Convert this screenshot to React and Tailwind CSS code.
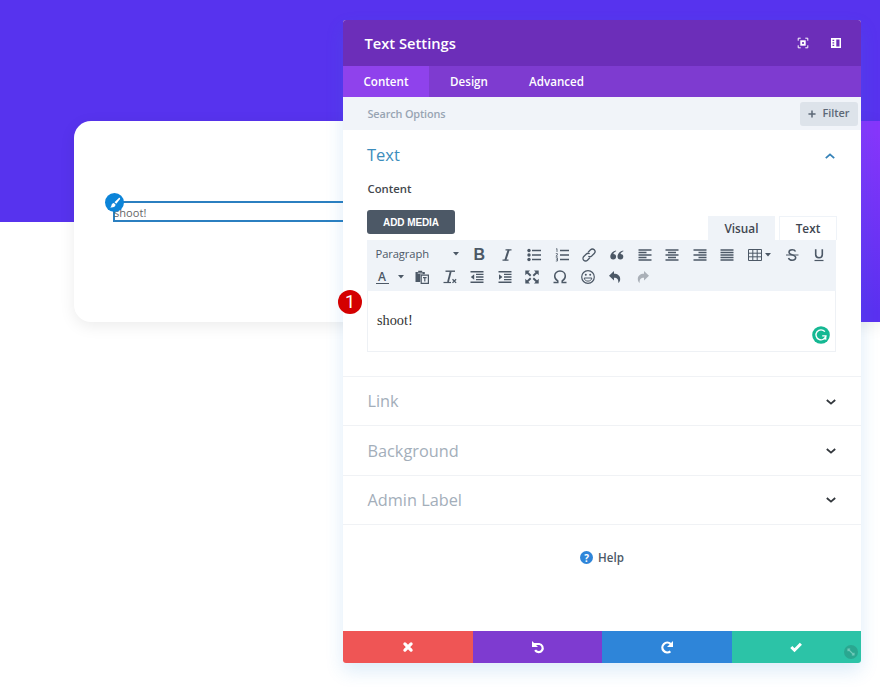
import React from 'react';

const Svg = ({ children, size = 16, className = '' }) => (
  <svg
    width={size}
    height={size}
    viewBox="0 0 16 16"
    fill="none"
    stroke="currentColor"
    strokeWidth="1.5"
    className={`shrink-0 ${className}`}
  >
    {children}
  </svg>
);

const Caret = () => (
  <svg width="6" height="4" viewBox="0 0 6 4" fill="currentColor" className="shrink-0">
    <path d="M0 0h6L3 3.5z" />
  </svg>
);

/* Editor toolbar icons */
const ItalicIcon = () => (
  <Svg>
    <path d="M6.5 2.8h6M3.5 13.2h6" strokeWidth="1.2" />
    <path d="M9.7 2.8L6.3 13.2" strokeWidth="2" />
  </Svg>
);

const BulletListIcon = () => (
  <Svg>
    <path d="M6 3.5h9M6 8h9M6 12.5h9" />
    <g fill="currentColor" stroke="none">
      <circle cx="3" cy="3.5" r="1.7" />
      <circle cx="3" cy="8" r="1.7" />
      <circle cx="3" cy="12.5" r="1.7" />
    </g>
  </Svg>
);

const NumberListIcon = () => (
  <Svg>
    <path d="M6 3.5h9M6 8h9M6 12.5h9" />
    <path
      d="M2 2.2l1-.6v3.4M1.8 6.6h1.6v1.2L1.9 9.2h1.9M1.8 10.8h1.7v3.2H1.8M2.2 12.3h1.3"
      strokeWidth=".8"
    />
  </Svg>
);

const LinkIcon = () => (
  <Svg>
    <g transform="rotate(-45 8 8)" strokeWidth="1.3">
      <path d="M6.6 10.6H3.2a2.6 2.6 0 010-5.2h3.6a2.6 2.6 0 012.5 2.2" />
      <path d="M9.4 5.4h3.400a2.600 2.600 0 010 5.200H9.200a2.600 2.600 0 01-2.500-2.200" />
    </g>
  </Svg>
);

const QuoteIcon = () => (
  <Svg>
    <g fill="currentColor" stroke="none">
      <path d="M7 3.4C3.600 4.200 1.300 6.500 1.300 9.600a2.900 2.900 0 105.800 0A2.700 2.700 0 004.400 7c.2-1.200 1.200-2.100 2.800-2.700z" />
      <path d="M14.200 3.400C10.800 4.200 8.500 6.500 8.500 9.600a2.900 2.900 0 105.800 0A2.700 2.700 0 0011.600 7c.2-1.200 1.200-2.100 2.800-2.700z" />
    </g>
  </Svg>
);

const AlignLeftIcon = () => (
  <Svg><path d="M1.500 3h13M1.500 5.500h8M1.500 8h13M1.500 10.500h8M1.500 13h13" /></Svg>
);

const AlignCenterIcon = () => (
  <Svg><path d="M1.500 3h13M4 5.500h8M1.500 8h13M4 10.500h8M1.500 13h13" /></Svg>
);

const AlignRightIcon = () => (
  <Svg><path d="M1.500 3h13M6.500 5.500h8M1.500 8h13M6.500 10.500h8M1.500 13h13" /></Svg>
);

const JustifyIcon = () => (
  <Svg><path d="M1.500 3h13M1.500 5.500h13M1.500 8h13M1.500 10.500h13M1.500 13h13" /></Svg>
);

const TableIcon = () => (
  <Svg>
    <path d="M1.500 2.500h13v11h-13zM1.500 6.200h13M1.500 9.800h13M5.800 2.500v11M10.200 2.500v11" strokeWidth="1" />
  </Svg>
);

const StrikeIcon = () => (
  <Svg>
    <path d="M2 8h12.500" strokeWidth="1" />
    <path d="M11.500 4.600C11 3.300 9.800 2.700 8.200 2.700c-2 0-3.200 1-3.200 2.500C5 8.500 11.700 7.300 11.700 10.600c0 1.700-1.400 2.700-3.500 2.700-1.900 0-3.200-.8-3.700-2.300" />
  </Svg>
);

const UnderlineIcon = () => (
  <Svg>
    <path d="M4.700 2.200v5.300a3.300 3.300 0 006.600 0V2.200" strokeWidth="1.600" />
    <path d="M3.500 13.500h9" strokeWidth="1.200" />
  </Svg>
);

const PasteIcon = () => (
  <Svg>
    <path d="M1.500 3h2.700V1.800h4V3h2.600v2.200H6.300V13H1.500z" fill="currentColor" stroke="none" />
    <path d="M3.700 4.200h5" stroke="#eff3f8" strokeWidth=".8" />
    <path d="M7.200 6.200h7.200v8.200H7.200z" strokeWidth="1.200" />
    <path d="M9 8.600h3.600M10.800 8.600v4" strokeWidth="1.200" />
  </Svg>
);

const ClearFormatIcon = () => (
  <Svg>
    <path d="M3.500 2.200h9.500" strokeWidth="1.400" />
    <path d="M8.700 2.500L6 13" strokeWidth="1.800" />
    <path d="M1.500 13.500h7.500" strokeWidth="1.200" />
    <path d="M10.500 10.300l3.600 3.600M14.100 10.300l-3.600 3.600" strokeWidth="1.300" />
  </Svg>
);

const OutdentIcon = () => (
  <Svg>
    <path d="M1.500 2.700h13M7 5.400h7.500M7 8h7.500M7 10.600h7.500M1.500 13.300h13" strokeWidth="1.400" />
    <path d="M5.200 5.200v5.600L1.800 8z" fill="currentColor" stroke="none" />
  </Svg>
);

const IndentIcon = () => (
  <Svg>
    <path d="M1.500 2.700h13M7 5.400h7.500M7 8h7.500M7 10.600h7.500M1.500 13.300h13" strokeWidth="1.400" />
    <path d="M2 5.200v5.600L5.400 8z" fill="currentColor" stroke="none" />
  </Svg>
);

const FullscreenIcon = () => (
  <Svg>
    <g fill="currentColor" stroke="none">
      <path d="M1.300 1.500h4.700L1.300 6.200zM14.700 1.500H10l4.700 4.700zM1.300 14.500h4.700L1.300 9.800zM14.700 14.500H10l4.700-4.700z" />
    </g>
    <path d="M3 3.200l3.700 3.600M13 3.200L9.300 6.800M3 12.800l3.700-3.600M13 12.800L9.300 9.200" strokeWidth="1.900" />
  </Svg>
);

const OmegaIcon = () => (
  <Svg>
    <path
      d="M1.500 13.500h4.300v-1.600C3.900 10.900 2.700 9.300 2.700 7.100c0-3 2.200-5 5.300-5s5.300 2 5.300 5c0 2.200-1.200 3.800-3.100 4.800v1.600h4.300"
      strokeWidth="1.500"
    />
  </Svg>
);

const SmileIcon = () => (
  <Svg>
    <circle cx="8" cy="8" r="6.300" strokeWidth="1.200" />
    <path d="M4.200 9h7.600c-.3 2-1.700 3.100-3.800 3.100S4.500 11 4.200 9z" strokeWidth="1" />
    <circle cx="5.800" cy="5.800" r="1" fill="currentColor" stroke="none" />
    <circle cx="10.200" cy="5.800" r="1" fill="currentColor" stroke="none" />
  </Svg>
);

const UndoIcon = () => (
  <Svg>
    <path
      d="M7 2v2.700c3.800 0 6.200 2 6.200 5.200 0 1.600-.6 3-1.900 4.100.3-3.400-1-5.200-4.300-5.200v2.700L2 6.700z"
      fill="currentColor"
      stroke="none"
    />
  </Svg>
);

const RedoIcon = () => (
  <Svg className="text-[#aab0b8]">
    <path
      d="M9 2v2.700c-3.800 0-6.200 2-6.200 5.200 0 1.600.6 3 1.900 4.100-.3-3.400 1-5.200 4.300-5.200v2.700l5-4.800z"
      fill="currentColor"
      stroke="none"
    />
  </Svg>
);

const Tool = ({ children }) => (
  <button className="flex h-[22px] w-[27.55px] shrink-0 items-center justify-center">
    {children}
  </button>
);

const Toolbar = () => (
  <div className="h-[51px] bg-[#eff3f8] pt-[3.5px] pl-[0.5px] text-[#4c5866]">
    <div className="flex h-[22px] items-center">
      <button className="flex w-[98px] shrink-0 items-center justify-between pl-2 pr-[7px] text-[11.2px] tracking-[-0.1px]">
        Paragraph
        <Caret />
      </button>
      <Tool>
        <span className="font-['Liberation_Sans'] text-[16px] leading-none font-bold">B</span>
      </Tool>
      <Tool><ItalicIcon /></Tool>
      <Tool><BulletListIcon /></Tool>
      <Tool><NumberListIcon /></Tool>
      <Tool><LinkIcon /></Tool>
      <Tool><QuoteIcon /></Tool>
      <Tool><AlignLeftIcon /></Tool>
      <Tool><AlignCenterIcon /></Tool>
      <Tool><AlignRightIcon /></Tool>
      <Tool><JustifyIcon /></Tool>
      <button className="flex w-[37px] shrink-0 items-center gap-0.5 pl-[6px]">
        <TableIcon />
        <Caret />
      </button>
      <Tool><StrikeIcon /></Tool>
      <Tool><UnderlineIcon /></Tool>
    </div>
    <div className="flex h-[23px] items-center">
      <button className="flex w-[41px] shrink-0 items-center gap-[9px] pl-2">
        <span className="w-[13px] border-b border-[#4c5866] text-center text-[12px] leading-[13px] font-semibold">
          A
        </span>
        <Caret />
      </button>
      <Tool><PasteIcon /></Tool>
      <Tool><ClearFormatIcon /></Tool>
      <Tool><OutdentIcon /></Tool>
      <Tool><IndentIcon /></Tool>
      <Tool><FullscreenIcon /></Tool>
      <Tool><OmegaIcon /></Tool>
      <Tool><SmileIcon /></Tool>
      <Tool><UndoIcon /></Tool>
      <Tool><RedoIcon /></Tool>
    </div>
  </div>
);

const Chevron = ({ up }) => (
  <svg width="12" height="8" viewBox="0 0 12 8" fill="none" stroke="currentColor" strokeWidth="1.8">
    <path d={up ? 'M1.800 6.200L6 2.400l4.200 3.800' : 'M1.800 2L6 5.600 10.200 2'} />
  </svg>
);

const ClosedSection = ({ title }) => (
  <div className="flex h-[49.33px] items-center justify-between border-t border-[#f0f2f5] pt-px pr-[24.5px] pl-[24.5px]">
    <h3 className="text-[16.3px] text-[#a3aeba]">{title}</h3>
    <span className="text-[#32373c]"><Chevron /></span>
  </div>
);

const ModalHeader = () => (
  <header className="flex h-[46px] items-center justify-between bg-[#6c2eb9] pr-[19.5px] pl-[21.5px] text-white">
    <h2 className="text-[14.7px] font-semibold">Text Settings</h2>
    <div className="flex gap-[21px]">
      <svg width="12" height="12" viewBox="0 0 12 12" fill="none" stroke="currentColor" strokeWidth="1.300">
        <path d="M1.200 3.700V1.200h2.500M8.300 1.200h2.500v2.500M10.800 8.300v2.500H8.300M3.700 10.800H1.200V8.300" strokeWidth="1" />
        <rect x="4.200" y="4.200" width="3.600" height="3.600" strokeWidth="1.800" />
      </svg>
      <svg width="12" height="12" viewBox="0 0 12 12" fill="currentColor">
        <path
          fillRule="evenodd"
          d="M1 1h10v10H1zM6.300 2.600v6.800h3.200V2.600zM2.500 2.700v1.400h1.700V2.700zM2.500 5.200v1.400h1.700V5.200zM2.500 7.700v1.400h1.700V7.700z"
        />
      </svg>
    </div>
  </header>
);

const Tabs = () => (
  <nav className="flex h-[31px] bg-[#7e3bd0] text-[11.600px] font-semibold text-white">
    <a href="#" className="flex w-[86px] items-center justify-center bg-[#8f42ec]">Content</a>
    <a href="#" className="flex w-[80px] items-center justify-center">Design</a>
    <a href="#" className="flex w-[95px] items-center justify-center">Advanced</a>
  </nav>
);

const SearchBar = () => (
  <div className="flex h-[33px] items-center justify-between bg-[#f1f4f9] pr-[3px] pl-[24.5px] text-[10.900px] font-semibold">
    <span className="pt-px tracking-[-0.15px] text-[#98a4b3]">Search Options</span>
    <button className="flex h-6 w-[58px] items-center justify-center gap-[6px] rounded-[3px] bg-[#dde3ea] text-[#5c6876]">
      <svg width="8" height="8" viewBox="0 0 9 9" stroke="currentColor" strokeWidth="1.700">
        <path d="M4.500.5v8M.5 4.500h8" />
      </svg>
      Filter
    </button>
  </div>
);

const TextSection = () => (
  <section className="flex h-[246px] flex-col pr-[25px] pl-6">
    <div className="mt-[13px] flex h-6 items-center justify-between">
      <h3 className="text-[16.500px] text-[#3c8dbc]">Text</h3>
      <span className="mt-[2px] text-[#3582b8]"><Chevron up /></span>
    </div>
    <p className="mt-[14px] pl-[0.5px] text-[11.300px] leading-4 font-semibold text-[#43484d]">Content</p>
    <div className="mt-[13px] flex h-[30px] justify-between">
      <button className="h-6 w-[88px] rounded-[3px] bg-[#4c5866] font-['Liberation_Sans'] text-[10px] font-bold tracking-[-0.1px] text-white">
        ADD MEDIA
      </button>
      <div className="-mr-px mt-[6px] flex h-6 gap-1 text-[11.800px] font-semibold text-[#3f4651]">
        <button className="w-[67px] bg-[#eff3f8] pt-px">Visual</button>
        <button className="w-[58px] border border-b-0 border-[#eff3f8] bg-white">Text</button>
      </div>
    </div>
    <Toolbar />
    <div className="flex h-[61px] items-center justify-between border border-t-0 border-[#eef1f5] pr-[5.5px] pl-[9px]">
      <span className="font-['Liberation_Serif'] text-[14.300px] text-[#333]">shoot!</span>
      <svg width="18" height="18" viewBox="0 0 18 18" fill="none" className="mt-[28px]">
        <circle cx="9" cy="9" r="8.800" fill="#15b893" />
        <path d="M12.900 5.700A5 5 0 1013.900 9.800H10.200" stroke="#fff" strokeWidth="1.300" />
        <path d="M14.400 9.500v4.200l-3.200-.5z" fill="#fff" />
      </svg>
    </div>
  </section>
);

const FooterActions = () => (
  <footer className="relative grid h-8 grid-cols-4 overflow-hidden rounded-b-[3px] text-white">
    <button className="flex items-center justify-center bg-[#ef5555]">
      <svg width="12" height="12" viewBox="0 0 12 12" stroke="currentColor" strokeWidth="3.200" strokeLinecap="round">
        <path d="M2.900 2.900l6.200 6.200M9.100 2.900L2.900 9.100" />
      </svg>
    </button>
    <button className="flex items-center justify-center bg-[#7e3bd0] pl-[2px]">
      <svg width="14" height="14" viewBox="0 0 14 14" fill="none" stroke="currentColor" strokeWidth="2.200">
        <path d="M2.600 4h5.600a4.100 4.100 0 11-4.100 6.200" />
        <path d="M1 1v6h6L4.300 4.300z" fill="currentColor" stroke="none" />
      </svg>
    </button>
    <button className="flex items-center justify-center bg-[#2e85d9] pl-px">
      <svg width="14" height="14" viewBox="0 0 14 14" fill="none" stroke="currentColor" strokeWidth="2.300">
        <path d="M10.700 4A4.900 4.900 0 1010.400 11.300" />
        <path d="M13 1v6H7z" fill="currentColor" stroke="none" />
      </svg>
    </button>
    <button className="flex items-center justify-center bg-[#2cc3a7]">
      <svg width="12" height="12" viewBox="0 0 12 12" fill="none" stroke="currentColor" strokeWidth="3">
        <path d="M1.300 6l3.200 3.200 6.400-6.400" />
      </svg>
    </button>
    {/* Resize handle */}
    <span className="absolute right-[3px] bottom-[4px] flex size-[14px] items-center justify-center rounded-full bg-[#2aa790] text-[#6fcab9]">
      <svg width="8" height="8" viewBox="0 0 8 8" fill="none" stroke="currentColor" strokeWidth="1.100">
        <path d="M1 3.200V1h2.200M1 1l6 6M7 4.800V7H4.800" />
      </svg>
    </span>
  </footer>
);

const SettingsModal = () => (
  <div className="absolute top-[20px] left-[343px] flex h-[643px] w-[518px] flex-col rounded-[3px] bg-white shadow-[0_8px_18px_rgba(43,135,218,0.16)]">
    <div className="overflow-hidden rounded-t-[3px]">
      <ModalHeader />
      <Tabs />
    </div>
    <SearchBar />
    <TextSection />
    <ClosedSection title="Link" />
    <ClosedSection title="Background" />
    <ClosedSection title="Admin Label" />
    <div className="flex flex-1 justify-center border-t border-[#f0f2f5] pt-[24px]">
      <button className="flex h-[18px] items-center gap-[5px] text-[11.600px] font-semibold text-[#4c5866]">
        <span className="flex size-[13px] items-center justify-center rounded-full bg-[#2e85d9] text-[10px] leading-none font-bold text-white">
          ?
        </span>
        Help
      </button>
    </div>
    <FooterActions />
    {/* Step marker */}
    <span className="absolute top-[270px] left-[-5px] flex size-6 items-center justify-center rounded-full bg-[#d40000] font-['Roboto'] text-[18px] leading-none text-white">
      1
    </span>
  </div>
);

const PageModules = () => (
  <div className="flex h-[687px] flex-col bg-[linear-gradient(#5733ee_222px,#fff_222px)] pt-[121px]">
    <div className="flex h-[201px] pl-[74px]">
      <div className="w-[500px] shrink-0 rounded-[17px] bg-white pt-20 pl-[39px] shadow-[0_4px_16px_rgba(0,0,0,0.08)]">
        <div className="relative h-[21px] border-2 border-[#2b7fc0] text-[11.100px] leading-[19px] text-[#666]">
          <span className="-ml-px">shoot!</span>
          <span className="absolute -top-[10px] -left-[10px] flex size-[19px] items-center justify-center rounded-full bg-[#0c84d8]">
            <svg width="12" height="12" viewBox="0 0 12 12" fill="#fff">
              <path d="M10.900 1.100c.5.500.2 1-.2 1.500L7.300 6.800 5.500 5.200l4.100-4c.4-.4.900-.5 1.300-.1zM4.800 5.900l1.700 1.600c.1 1.900-1.800 3.300-5.300 3 1.300-.8 1-1.600 1.500-2.900.4-1 1.200-1.500 2.100-1.700z" />
            </svg>
          </span>
        </div>
      </div>
      <div className="w-[306px] shrink-0 bg-[linear-gradient(190deg,#8636fb_5%,#5a31f0_75%)] shadow-[0_4px_16px_rgba(0,0,0,0.08)]" />
    </div>
  </div>
);

const App = () => (
  <main className="relative h-[687px] w-[880px] overflow-hidden font-['Open_Sans',sans-serif]">
    <PageModules />
    <SettingsModal />
  </main>
);

export default App;
